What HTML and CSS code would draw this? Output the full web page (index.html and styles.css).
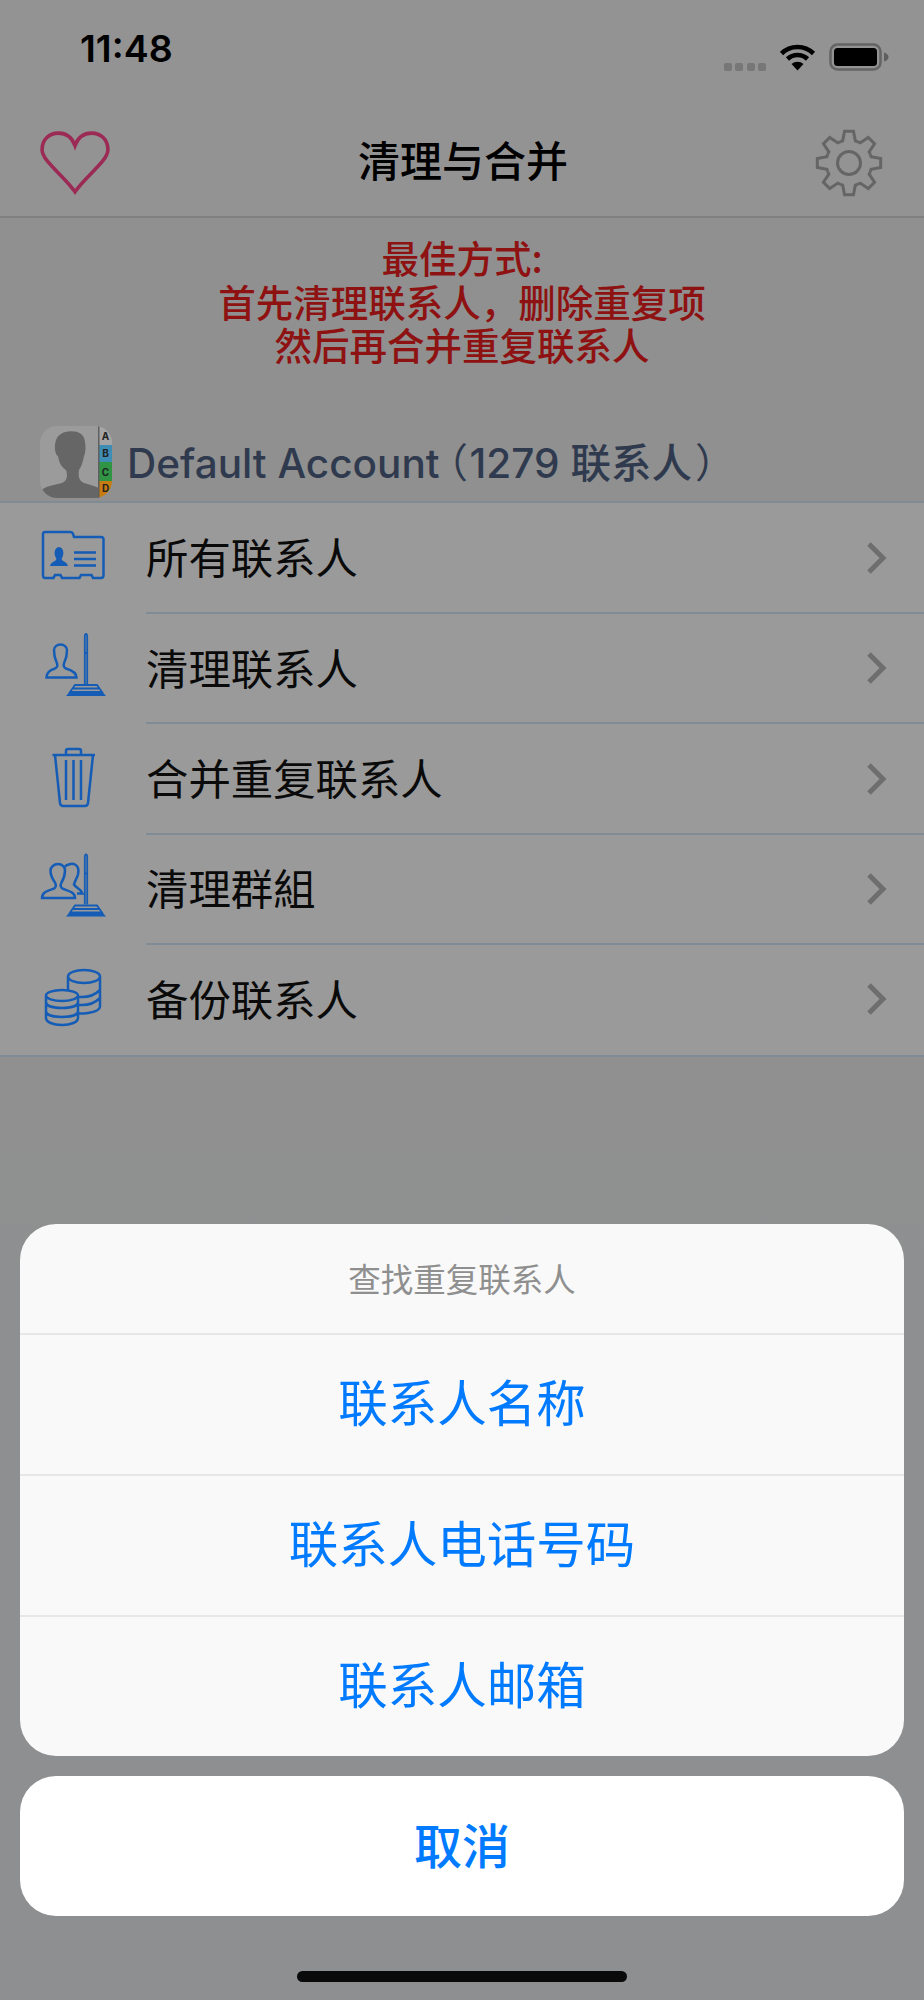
FILE: index.html
```html
<!DOCTYPE html>
<html lang="zh-CN">
<head>
<meta charset="utf-8">
<title>清理与合并</title>
<link rel="stylesheet" href="styles.css">
</head>
<body>
<div class="screen">
  <div class="status">
    <span class="time">11:48</span>
    <div class="status-icons">
      <div class="signal"><i></i><i></i><i></i><i></i></div>
      <svg class="wifi" width="37" height="28" viewBox="0 0 37 28">
        <path class="wifi-arc" d="M2.5 10.5A23 23 0 0 1 34.5 10.5M8.5 16A14.5 14.5 0 0 1 28.5 16"/>
        <path d="M18.5 27.5L12.5 21A9 9 0 0 1 24.5 21Z"/>
      </svg>
      <svg class="battery" width="60" height="28" viewBox="0 0 60 28">
        <rect class="batt-shell" x="1.5" y="1.5" width="50" height="25" rx="7"/>
        <rect x="5" y="5" width="43" height="18" rx="3.5"/>
        <path class="batt-nub" d="M55 9.5C58 10.5 59.5 12 59.5 14S58 17.500 55 18.500Z"/>
      </svg>
    </div>
  </div>

  <header class="nav">
    <svg class="heart" width="72" height="64" viewBox="0 0 70 62">
      <path d="M35 59C24 43 3 29 3 18C3 8 10 2 19 2C26 2 32 6 35 14C38 6 44 2 51 2C60 2 67 8 67 18C67 29 46 43 35 59Z"/>
    </svg>
    <h1 class="nav-title">清理与合并</h1>
    <svg class="gear" width="68" height="68" viewBox="-34 -34 68 68">
      <defs>
        <path id="tooth" d="M-8.800 -21.250L-6.340 -22.110L-4.450 -31.690H4.450L6.340 -22.110L8.800 -21.250"/>
      </defs>
      <use href="#tooth"/>
      <use href="#tooth" transform="rotate(45)"/>
      <use href="#tooth" transform="rotate(90)"/>
      <use href="#tooth" transform="rotate(135)"/>
      <use href="#tooth" transform="rotate(180)"/>
      <use href="#tooth" transform="rotate(225)"/>
      <use href="#tooth" transform="rotate(270)"/>
      <use href="#tooth" transform="rotate(315)"/>
      <circle r="11.500"/>
    </svg>
  </header>

  <section class="notice">
    <p>最佳方式:</p>
    <p>首先清理联系人&#xFF0C;删除重复项</p>
    <p>然后再合并重复联系人</p>
  </section>

  <div class="account">
    <svg class="avatar" width="72" height="72" viewBox="0 0 72 72">
      <defs><clipPath id="av"><rect width="72" height="72" rx="17"/></clipPath></defs>
      <g clip-path="url(#av)">
        <rect width="72" height="72" fill="#9b9b9b"/>
        <path fill="#666" d="M0 66C4 60 14 59 22 57C27 55 28 50 26 44C20 40 19 35 18 30C14 28 13 12 21 8C25 5 36 4 41 8C47 12 46 28 44 30C43 36 41 41 39 44C38 50 39 55 44 57C50 59 55 60 59 62V72H0Z"/>
        <rect x="59" y="0" width="13" height="19" fill="#a5a5a5"/>
        <rect x="59" y="19" width="13" height="17" fill="#3d8db5"/>
        <rect x="59" y="36" width="13" height="19" fill="#2f9544"/>
        <rect x="59" y="55" width="13" height="17" fill="#c67c10"/>
        <rect x="58" y="0" width="1.500" height="72" fill="#5f5f5f"/>
        <text class="tab-letter" x="65.500" y="14">A</text>
        <text class="tab-letter" x="65.500" y="31">B</text>
        <text class="tab-letter" x="65.500" y="50">C</text>
        <text class="tab-letter" x="65.500" y="66">D</text>
      </g>
    </svg>
    <span class="account-name">Default Account<span class="paren paren-open">&#xFF08;</span>1279 <span class="paren-cjk">联系人</span><span class="paren paren-close">&#xFF09;</span></span>
  </div>

  <nav class="list">
    <a class="row">
      <svg class="row-icon" width="90" height="90" viewBox="28 512 90 90">
        <path class="line" d="M45 531H70Q72.500 531 73 533L74 536H101Q103.500 536 103.500 538.500V574Q103.500 577 101 577H93L91.500 574H81L79.500 577H62L60.500 574H55L53.500 577H45Q43 577 43 574V533.500Q43 531 45 531Z"/>
        <path class="solid" d="M50 565C51 561 55 560.500 56 559C56.500 558 56.500 557.500 55.500 556C54 553 54 547 59 546C64 547 64 553 62.500 556C61.500 557.500 61.500 558 62 559C63 560.500 67 561 68 565Z"/>
        <path class="line" d="M74 551.500H96M74 558H96M74 564.500H96"/>
      </svg>
      <span class="row-label">所有联系人</span>
      <svg class="chev" width="22" height="34" viewBox="0 0 22 34"><path d="M3 3L17 17L3 31"/></svg>
    </a>
    <a class="row">
      <svg class="row-icon" width="90" height="90" viewBox="-2 2 90 90">
        <path class="line" d="M16.500 56.500H46.500C46.500 51 41 49 36 47.500C33.500 46.500 33 44 34.500 41C36.500 37 37 32 37 29C37 26 34 23.500 30.500 23.500C27 23.500 24 26 24 29C24 32 24.500 37 26.500 41C28 44 27.500 46.500 25 47.500C20 49 16.500 51 16.500 56.500Z"/>
        <path class="line thin" d="M54.800 63V16Q54.800 13 56 13Q57.200 13 57.200 16V63M54.800 32H57.200"/>
        <path class="line thin" d="M45 64H67L72 71H40ZM43 67.500H69"/>
        <path class="solid" d="M40 70.500H72L76 75H36Z"/>
      </svg>
      <span class="row-label">清理联系人</span>
      <svg class="chev" width="22" height="34" viewBox="0 0 22 34"><path d="M3 3L17 17L3 31"/></svg>
    </a>
    <a class="row">
      <svg class="row-icon" width="90" height="90" viewBox="28 733 90 90">
        <path class="line" d="M52.500 754H95M55 754L60 802Q60.500 805 63 805H85Q87.500 805 88 802L93 754M66 753V750Q66 748 68 748H79Q81 748 81 750V753"/>
        <path class="line" d="M66 759V799M73.500 759V799M81 759V799"/>
      </svg>
      <span class="row-label">合并重复联系人</span>
      <svg class="chev" width="22" height="34" viewBox="0 0 22 34"><path d="M3 3L17 17L3 31"/></svg>
    </a>
    <a class="row">
      <svg class="row-icon" width="90" height="90" viewBox="-2 2.500 90 90">
        <path class="line" d="M42 56.500H12C12 51 17 49.500 23 47.500C26 46.500 26.500 44 25 41C22 37 20.500 33 20.500 29C20.500 25.500 24 22.500 28 22.500C32 22.500 35 25.500 35 29C35 33 34 37 31.500 41C30 44 30.500 46.500 33.500 47.500C39 49.500 45 51 45 56.500Z"/>
        <path class="line" d="M35 25C37 23 42 21.500 45 23C48 24.500 49 28 48 33C47 37 44.500 40 44 43C45 46 51 47 52.500 52H47"/>
        <path class="line thin" d="M54.800 63V16Q54.800 13 56 13Q57.200 13 57.200 16V63M54.800 32H57.200"/>
        <path class="line thin" d="M45 64H67L72 71H40ZM43 67.500H69"/>
        <path class="solid" d="M40 70.500H72L76 75H36Z"/>
      </svg>
      <span class="row-label">清理群組</span>
      <svg class="chev" width="22" height="34" viewBox="0 0 22 34"><path d="M3 3L17 17L3 31"/></svg>
    </a>
    <a class="row">
      <svg class="row-icon" width="90" height="90" viewBox="28 954 90 90">
        <ellipse class="line" cx="84" cy="976.500" rx="16" ry="6.500"/>
        <path class="line" d="M68 977V990M100 977V1006Q100 1012 84 1013.500H79M79 997Q92 998 100 990M79 1005Q92 1006 100 998"/>
        <ellipse class="line" cx="62" cy="995.500" rx="16" ry="5.500"/>
        <path class="line" d="M46 996V1018C46 1022 53 1025 62 1025S78 1022 78 1018V996M46 1002C46 1006 53 1008 62 1008S78 1006 78 1002M46 1011C46 1015 53 1017 62 1017S78 1015 78 1011"/>
      </svg>
      <span class="row-label">备份联系人</span>
      <svg class="chev" width="22" height="34" viewBox="0 0 22 34"><path d="M3 3L17 17L3 31"/></svg>
    </a>
  </nav>

  <div class="action-sheet">
    <div class="sheet-group">
      <div class="sheet-title">查找重复联系人</div>
      <div class="sheet-item">联系人名称</div>
      <div class="sheet-item">联系人电话号码</div>
      <div class="sheet-item">联系人邮箱</div>
    </div>
    <div class="sheet-cancel">取消</div>
  </div>
  <div class="home-bar"></div>
</div>
</body>
</html>
```
FILE: styles.css
```css
* { box-sizing: border-box; }
html, body { margin: 0; padding: 0; }
body { font-family: "Inter", "Noto Sans CJK SC", sans-serif; }

.screen {
  position: relative;
  width: 924px;
  height: 2000px;
  overflow: hidden;
  background: linear-gradient(#909090 1056px, #8e8f90 1300px);
}

/* status bar */
.status {
  height: 90px;
  display: flex;
  justify-content: space-between;
  padding: 26px 35px 0 80px;
  background: #939393;
}
.time {
  font-size: 37.500px;
  line-height: 46px;
  font-weight: 600;
  color: #000;
}
.status-icons {
  display: flex;
  align-items: flex-end;
  height: 45px;
}
.signal { display: flex; gap: 3.300px; margin-right: 13px; }
.signal i { width: 8px; height: 8px; border-radius: 2px; background: #777; }
.wifi { margin-right: 13px; }
.wifi path { fill: #000; }
.wifi .wifi-arc { fill: none; stroke: #000; stroke-width: 4.600; }
.battery rect { fill: #000; }
.battery .batt-shell { fill: none; stroke: #646464; stroke-width: 2.500; }
.battery .batt-nub { fill: #5f5f5f; }

/* navigation */
.nav {
  height: 128px;
  padding: 20px 41px 0 39px;
  display: flex;
  align-items: center;
  justify-content: space-between;
  background: #939393;
  border-bottom: 2px solid #808080;
}
.nav-title {
  margin: 0;
  padding-bottom: 8px;
  font: 500 42px/50px "Noto Sans CJK SC", sans-serif;
  color: #000;
}
.heart path { fill: none; stroke: #9b2a55; stroke-width: 3.500; }
.gear use, .gear circle { fill: none; stroke: #656565; stroke-width: 3; }

/* notice */
.notice {
  height: 147.500px;
  padding-top: 17px;
  text-align: center;
  font: 500 37.500px/43.500px "Noto Sans CJK SC", sans-serif;
  color: #8e1212;
}
.notice p { margin: 0; }

/* account */
.account {
  display: flex;
  align-items: center;
  gap: 15px;
  height: 135px;
  padding: 60px 0 3px 40px;
}
.account-name {
  height: 72px;
  padding-top: 3px;
  font-size: 40.500px;
  line-height: 69px;
  font-weight: 500;
  color: #2f3a4e;
  white-space: nowrap;
}
.paren, .paren-cjk {
  line-height: 0;
  font-family: "Noto Sans CJK SC", sans-serif;
}
.paren {
  font-weight: 400;
}
.paren-open { margin: 0 1.500px 0 -12px; }
.paren-close { margin-left: 3px; }
.tab-letter {
  font-size: 10px;
  font-weight: 700;
  text-anchor: middle;
  fill: #222;
}

/* list */
.list {
  display: flex;
  flex-direction: column;
  height: 556px;
  background: #9a9a9a;
  border-top: 2px solid #7f8b95;
  border-bottom: 2px solid #7f8b95;
}
.row {
  position: relative;
  flex: 1;
  display: flex;
  align-items: center;
  padding: 0 36px 0 28px;
}
.row + .row::before {
  content: "";
  position: absolute;
  top: -1px;
  left: 146px;
  right: 0;
  height: 2px;
  background: #7f8b95;
}
.row-icon { flex: none; margin-right: 28px; }
.row-icon .line { fill: none; stroke: #145cb5; stroke-width: 2.500; }
.row-icon .thin { stroke-width: 1.800; }
.row-icon .solid { fill: #145cb5; }
.row-label {
  flex: 1;
  padding-bottom: 3px;
  font: 400 42.400px/52px "Noto Sans CJK SC", sans-serif;
  color: #0a0a0a;
}
.chev path { fill: none; stroke: #6e6e6e; stroke-width: 5; }

/* action sheet */
.action-sheet {
  position: absolute;
  top: 1224px;
  left: 20px;
  right: 20px;
  display: flex;
  flex-direction: column;
  gap: 20px;
  font-family: "Noto Sans CJK SC", sans-serif;
  text-align: center;
}
.sheet-group {
  display: grid;
  grid-template-rows: 109px 141px 141px 141px;
  background: #f9f9f9;
  border-radius: 36px;
  overflow: hidden;
}
.sheet-title {
  display: flex;
  align-items: center;
  justify-content: center;
  padding-bottom: 2px;
  font-size: 32.500px;
  color: #8f8f8f;
}
.sheet-item {
  display: flex;
  align-items: center;
  justify-content: center;
  padding-bottom: 8px;
  border-top: 2px solid #e7e7e7;
  font-size: 49.500px;
  color: #007aff;
}
.sheet-cancel {
  height: 140px;
  display: flex;
  align-items: center;
  justify-content: center;
  padding-bottom: 6px;
  background: #fff;
  border-radius: 36px;
  font-size: 48px;
  font-weight: 500;
  color: #007aff;
}
.home-bar {
  position: absolute;
  top: 1971px;
  left: 297px;
  width: 330px;
  height: 11px;
  border-radius: 6px;
  background: #0a0a0a;
}
```
